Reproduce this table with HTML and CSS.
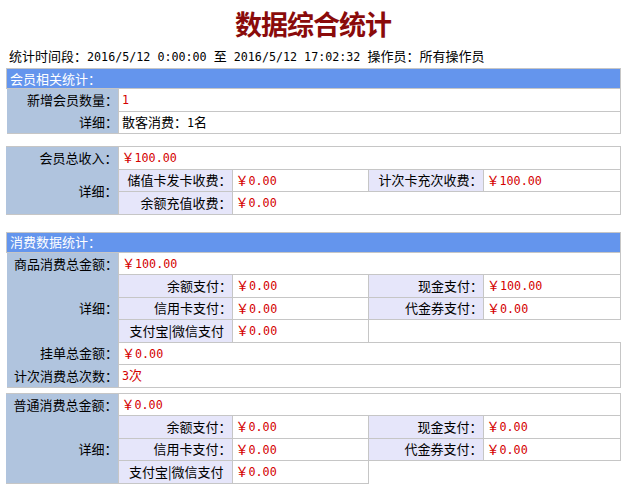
FILE: index.html
```html
<!DOCTYPE html>
<html lang="zh-CN">
<head>
<meta charset="utf-8">
<title>数据综合统计</title>
<link rel="stylesheet" href="styles.css">
</head>
<body>
<h1 class="title">数据综合统计</h1>
<div class="info">统计时间段：<span class="num">2016/5/12 0:00:00 </span>至<span class="num"> 2016/5/12 17:02:32 </span>操作员：所有操作员</div>

<table class="stat t1">
  <colgroup><col class="c1"><col class="c2"><col class="c3"><col class="c4"><col class="c5"></colgroup>
  <tr class="hdrow"><td class="hd" colspan="5">会员相关统计：</td></tr>
  <tr><td class="l">新增会员数量：</td><td class="v red" colspan="4"><span class="num">1</span></td></tr>
  <tr><td class="l b">详细：</td><td class="v" colspan="4">散客消费：<span class="num">1</span>名</td></tr>
</table>

<table class="stat t2">
  <colgroup><col class="c1"><col class="c2"><col class="c3"><col class="c4"><col class="c5"></colgroup>
  <tr><td class="l t">会员总收入：</td><td class="v red" colspan="4">￥<span class="num">100.00</span></td></tr>
  <tr><td class="l b" rowspan="2">详细：</td><td class="s">储值卡发卡收费：</td><td class="v red">￥<span class="num">0.00</span></td><td class="s">计次卡充次收费：</td><td class="v red">￥<span class="num">100.00</span></td></tr>
  <tr><td class="s">余额充值收费：</td><td class="v red" colspan="3">￥<span class="num">0.00</span></td></tr>
</table>

<table class="stat t3">
  <colgroup><col class="c1"><col class="c2"><col class="c3"><col class="c4"><col class="c5"></colgroup>
  <tr class="hdrow"><td class="hd" colspan="5">消费数据统计：</td></tr>
  <tr><td class="l">商品消费总金额：</td><td class="v red" colspan="4">￥<span class="num">100.00</span></td></tr>
  <tr><td class="l" rowspan="3">详细：</td><td class="s">余额支付：</td><td class="v red">￥<span class="num">0.00</span></td><td class="s">现金支付：</td><td class="v red">￥<span class="num">100.00</span></td></tr>
  <tr><td class="s">信用卡支付：</td><td class="v red">￥<span class="num">0.00</span></td><td class="s">代金券支付：</td><td class="v red">￥<span class="num">0.00</span></td></tr>
  <tr><td class="s nc">支付宝|微信支付</td><td class="v red">￥<span class="num">0.00</span></td></tr>
  <tr><td class="l">挂单总金额：</td><td class="v red" colspan="4">￥<span class="num">0.00</span></td></tr>
  <tr><td class="l b">计次消费总次数：</td><td class="v red" colspan="4"><span class="num">3</span>次</td></tr>
</table>

<table class="stat t4">
  <colgroup><col class="c1"><col class="c2"><col class="c3"><col class="c4"><col class="c5"></colgroup>
  <tr><td class="l t">普通消费总金额：</td><td class="v red" colspan="4">￥<span class="num">0.00</span></td></tr>
  <tr><td class="l b" rowspan="3">详细：</td><td class="s">余额支付：</td><td class="v red">￥<span class="num">0.00</span></td><td class="s">现金支付：</td><td class="v red">￥<span class="num">0.00</span></td></tr>
  <tr><td class="s">信用卡支付：</td><td class="v red">￥<span class="num">0.00</span></td><td class="s">代金券支付：</td><td class="v red">￥<span class="num">0.00</span></td></tr>
  <tr><td class="s nc">支付宝|微信支付</td><td class="v red">￥<span class="num">0.00</span></td></tr>
</table>
</body>
</html>
```

FILE: styles.css
```css
html, body {
  margin: 0;
  padding: 0;
  background: #ffffff;
}
body {
  font-family: "Noto Sans CJK SC", "Liberation Sans", sans-serif;
  font-size: 13px;
  color: #000000;
}
.num {
  font-family: "DejaVu Sans Mono", "Liberation Mono", monospace;
  font-size: 11.7px;
}
.title {
  margin: 0;
  padding: 9px 0 9px 0;
  height: 30px;
  line-height: 30px;
  text-align: center;
  font-size: 27px;
  font-weight: 700;
  letter-spacing: -1px;
  color: #8a0b0b;
}
.info {
  padding-left: 9px;
  height: 16px;
  line-height: 16px;
  white-space: pre;
}
.stat {
  width: 614px;
  margin: 0 0 0 6px;
  border-collapse: collapse;
  table-layout: fixed;
}
.stat col.c1 { width: 112px; }
.stat col.c2 { width: 114px; }
.stat col.c3 { width: 136px; }
.stat col.c4 { width: 115px; }
.stat col.c5 { width: 137px; }
.t1 { margin-top: 4px; }
.t2 { margin-top: 12px; }
.t3 { margin-top: 17px; }
.t4 { margin-top: 5px; }
.stat tr { height: 22.5px; }
.stat tr.hdrow { height: 20px; }
.stat td {
  padding: 0;
  border: 1px solid #c6c6c6;
  line-height: 16px;
  vertical-align: middle;
  white-space: nowrap;
  overflow: hidden;
}
.stat td.hd {
  background: #6495ed;
  color: #ffffff;
  padding-left: 3px;
}
.stat td.l {
  background: #b0c4de;
  text-align: right;
  padding-right: 0;
  border-top: none;
  border-bottom: none;
  border-left: none;
}
.stat td.l.t { border-top: 1px solid #c6c6c6; }
.stat td.l.b { border-bottom: 1px solid #c6c6c6; }
.stat td.s {
  background: #e6e6fa;
  text-align: right;
  padding-right: 0;
}
.stat td.s.nc { padding-right: 8px; }
.stat td.v {
  background: #ffffff;
  padding-left: 3px;
}
.stat td.red { color: #d40000; }
```
